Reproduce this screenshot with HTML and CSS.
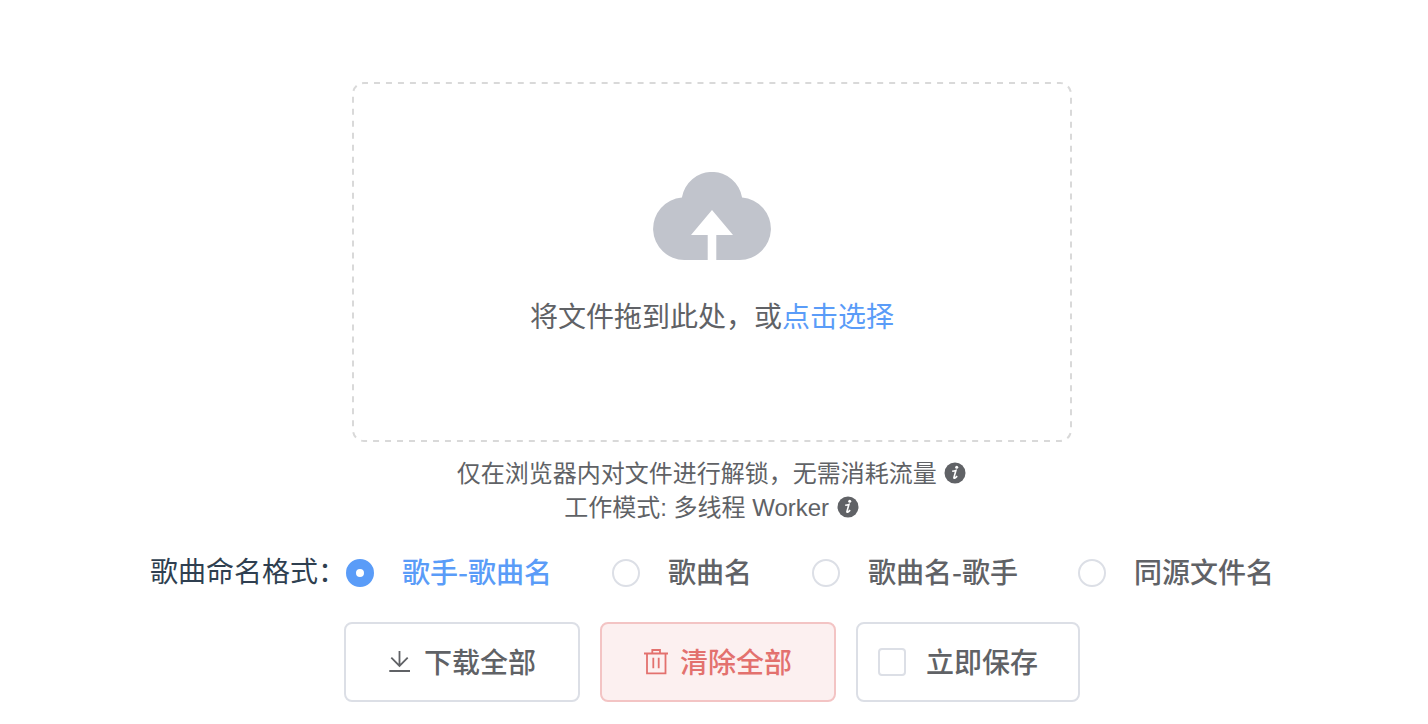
FILE: index.html
```
<!DOCTYPE html>
<html lang="zh-CN">
<head>
    <meta charset="UTF-8">
    <meta name="viewport" content="width=device-width, initial-scale=1.0">
    <title>音乐解锁</title>
    <link rel="stylesheet" href="styles.css">
</head>
<body>
    <main class="page">
        <label class="upload">
            <svg class="upload-border" aria-hidden="true">
                <rect x="1" y="1" rx="11" pathLength="2136"/>
            </svg>
            <input class="upload-input" type="file" multiple>
            <svg class="upload-icon" viewBox="0 0 118 88" aria-hidden="true">
                <path fill="currentColor" d="M28.900 25.500A30.500 30.500 0 0 1 89.100 25.500A31.300 31.300 0 0 1 86.500 88H63.300V63H80L59 38L38 63H54.700V88H31.500A31.300 31.300 0 0 1 28.900 25.500Z"/>
            </svg>
            <span class="upload-text">将文件拖到此处，或<em>点击选择</em></span>
        </label>

        <div class="tips">
            <div>仅在浏览器内对文件进行解锁，无需消耗流量
                <svg class="info" viewBox="0 0 24 24" aria-hidden="true">
                    <circle cx="12" cy="12" r="10.500" fill="currentColor"/>
                    <circle cx="13.700" cy="6.300" r="1.500" fill="#fff"/>
                    <path d="M9.200 10.200Q11.500 10 12.900 9.500L10.900 16.600Q10.700 18.500 14.200 15.200" fill="none" stroke="#fff" stroke-width="1.600"/>
                </svg>
            </div>
            <div>工作模式: 多线程 Worker
                <svg class="info" viewBox="0 0 24 24" aria-hidden="true">
                    <circle cx="12" cy="12" r="10.500" fill="currentColor"/>
                    <circle cx="13.700" cy="6.300" r="1.500" fill="#fff"/>
                    <path d="M9.200 10.200Q11.500 10 12.900 9.500L10.900 16.600Q10.700 18.500 14.200 15.200" fill="none" stroke="#fff" stroke-width="1.600"/>
                </svg>
            </div>
        </div>

        <div class="format" role="radiogroup" aria-labelledby="format-title">
            <span id="format-title">歌曲命名格式：</span>
            <div class="radios">
                <label class="radio"><input type="radio" name="format" value="1" checked><span>歌手-歌曲名</span></label>
                <label class="radio"><input type="radio" name="format" value="2"><span>歌曲名</span></label>
                <label class="radio"><input type="radio" name="format" value="3"><span>歌曲名-歌手</span></label>
                <label class="radio"><input type="radio" name="format" value="4"><span>同源文件名</span></label>
            </div>
        </div>

        <div class="actions">
            <button class="button" type="button">
                <svg class="icon" viewBox="0 0 28 28" aria-hidden="true">
                    <path d="M13.500 3V18M5.300 9.700L13.500 17.900L21.700 9.700M3.300 23H24"/>
                </svg>
                <span>下载全部</span>
            </button>
            <button class="button danger" type="button">
                <svg class="icon" viewBox="0 0 28 28" aria-hidden="true">
                    <path d="M2 5.500H26M10.300 5.500V2H18V5.500M5 5.500V25.300H23.500V5.500M11.300 9.700V20.300M16.700 9.700V20.300"/>
                </svg>
                <span>清除全部</span>
            </button>
            <label class="button save"><input type="checkbox"><span>立即保存</span></label>
        </div>
    </main>
</body>
</html>
```
FILE: styles.css
```
* {
    box-sizing: border-box;
}
body {
    margin: 0;
    background: #fff;
    color: #606266;
    font-family: "Liberation Sans", "Noto Sans CJK SC", sans-serif;
    font-size: 28px;
}
.page {
    display: flex;
    flex-direction: column;
    align-items: center;
    padding: 82px 4px 20px 0;
}
.upload {
    position: relative;
    display: flex;
    flex-direction: column;
    align-items: center;
    width: 100%;
    max-width: 720px;
    padding: 90px 20px 104px;
    cursor: pointer;
}
.upload-border {
    position: absolute;
    top: 0;
    left: 0;
    width: 100%;
    height: 100%;
}
.upload-border rect {
    width: calc(100% - 2px);
    height: calc(100% - 2px);
    fill: none;
    stroke: #d9d9d9;
    stroke-width: 2;
    stroke-dasharray: 6 6;
    stroke-dashoffset: 2;
}
.upload:hover .upload-border rect {
    stroke: #5a9cf8;
}
.upload-input {
    display: none;
}
.upload-icon {
    width: 118px;
    height: 88px;
    margin-bottom: 38px;
    color: #c1c4cc;
}
.upload-text {
    line-height: 40px;
}
.upload-text em {
    color: #5a9cf8;
    font-style: normal;
}
.tips {
    margin-top: 15px;
    font-size: 24px;
    line-height: 34px;
    text-align: center;
}
.info {
    width: 24px;
    height: 24px;
    vertical-align: -3px;
}
.format {
    display: flex;
    align-items: center;
    margin-top: 28px;
    color: #2f3f50;
    line-height: 40px;
}
.radios {
    display: flex;
    gap: 60px;
}
.radio {
    display: flex;
    align-items: center;
    gap: 28px;
    color: #606266;
    font-family: "Noto Sans CJK SC", sans-serif;
    font-weight: 500;
    line-height: 36px;
    white-space: nowrap;
    cursor: pointer;
}
.radio span {
    padding-bottom: 4px;
}
.button span {
    padding-bottom: 2px;
}
.radio input {
    appearance: none;
    width: 28px;
    height: 28px;
    margin: 0;
    border: 2px solid #dcdfe6;
    border-radius: 50%;
}
.radio input:checked {
    border: 10px solid #5a9cf8;
}
.radio input:checked + span {
    color: #5a9cf8;
}
.actions {
    display: flex;
    gap: 20px;
    margin-top: 29px;
}
.button {
    display: flex;
    align-items: center;
    gap: 10px;
    height: 80px;
    padding: 0 42px 0 40px;
    background: #fff;
    border: 2px solid #dcdfe6;
    border-radius: 8px;
    color: #606266;
    font-family: "Noto Sans CJK SC", sans-serif;
    font-size: 28px;
    font-weight: 500;
    line-height: 36px;
    white-space: nowrap;
    cursor: pointer;
}
.danger {
    background: #fcf0f0;
    border-color: #f3c4c4;
    color: #e3716e;
}
.icon {
    width: 28px;
    height: 28px;
    fill: none;
    stroke: currentColor;
    stroke-width: 1.8;
}
.save {
    gap: 20px;
    padding: 0 40px 0 20px;
}
.save input {
    appearance: none;
    width: 28px;
    height: 28px;
    margin: 0;
    border: 2px solid #dcdfe6;
    border-radius: 4px;
}
.save input:checked {
    background: #5a9cf8;
    border-color: #5a9cf8;
}
```
